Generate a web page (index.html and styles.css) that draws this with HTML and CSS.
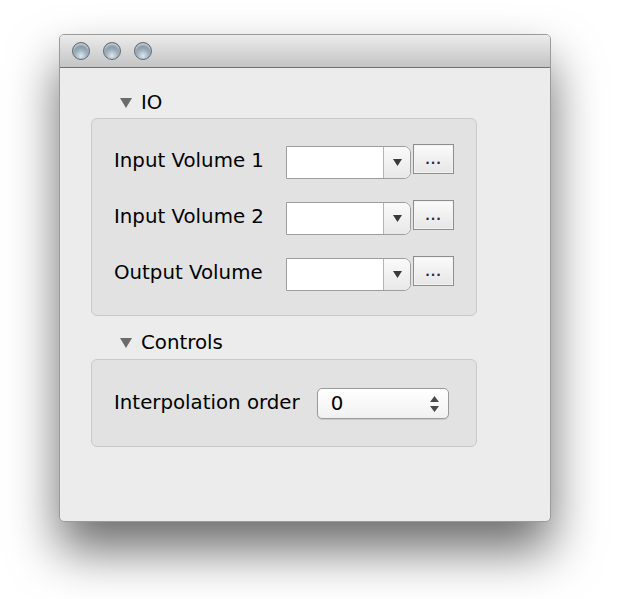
FILE: index.html
```html
<!doctype html>
<html>
<head>
<meta charset="utf-8">
<title>Resample Volume</title>
<link rel="stylesheet" href="styles.css">
</head>
<body>
	<div class="window">
		<div class="titlebar">
			<span class="light"></span>
			<span class="light"></span>
			<span class="light"></span>
		</div>
		<div class="content">
			<div class="section-head">
				<svg class="tri" width="12" height="10" viewBox="0 0 12 10"><path d="M0 0H12L6 10Z" fill="#6b6b6b"/></svg>
				<span>IO</span>
			</div>
			<div class="group">
				<div class="row">
					<span class="label">Input Volume 1</span>
					<div class="combo"><div class="field"></div><div class="drop"><svg width="9" height="7" viewBox="0 0 9 7"><path d="M0 0H9L4.5 7Z" fill="#3a3a3a"/></svg></div></div>
					<div class="browse">...</div>
				</div>
				<div class="row">
					<span class="label">Input Volume 2</span>
					<div class="combo"><div class="field"></div><div class="drop"><svg width="9" height="7" viewBox="0 0 9 7"><path d="M0 0H9L4.5 7Z" fill="#3a3a3a"/></svg></div></div>
					<div class="browse">...</div>
				</div>
				<div class="row">
					<span class="label">Output Volume</span>
					<div class="combo"><div class="field"></div><div class="drop"><svg width="9" height="7" viewBox="0 0 9 7"><path d="M0 0H9L4.5 7Z" fill="#3a3a3a"/></svg></div></div>
					<div class="browse">...</div>
				</div>
			</div>
			<div class="section-head second">
				<svg class="tri" width="12" height="10" viewBox="0 0 12 10"><path d="M0 0H12L6 10Z" fill="#6b6b6b"/></svg>
				<span>Controls</span>
			</div>
			<div class="group small">
				<div class="row">
					<span class="label auto">Interpolation order</span>
					<div class="spin">
						<span>0</span>
						<svg width="9" height="16" viewBox="0 0 9 16"><path d="M0 6H9L4.5 0Z M0 10H9L4.5 16Z" fill="#4a4a4a"/></svg>
					</div>
				</div>
			</div>
		</div>
	</div>
</body>
</html>
```

FILE: styles.css
```css
*{margin:0; padding:0; box-sizing:border-box;}
html,body{height:100%;}
body{background:#fff; padding:34px 0 0 59px; font-family:"DejaVu Sans", sans-serif; font-size:19.8px; color:#000; overflow:hidden;}

.window{width:492px; height:488px; background:#ececec; border:1px solid #9a9a9a; border-radius:5px; box-shadow:0 28px 50px rgba(0,0,0,.58); display:flex; flex-direction:column; overflow:hidden;}
.titlebar{height:33px; flex:none; display:flex; align-items:center; gap:13px; padding-left:12px; background:linear-gradient(#ebebeb,#c4c4c4); border-bottom:1px solid #717171;}
.light{width:18px; height:18px; border-radius:50%; border:1px solid #5f6d78; background:radial-gradient(circle at 50% 80%, #dde7ee 0, #9fb0bd 40%, #73838f 85%); box-shadow:inset 0 2px 2px rgba(255,255,255,.6);}

.content{padding:22px 0 0 31px;}
.section-head{height:24px; display:flex; align-items:center; padding-left:29px; gap:9px; margin-bottom:4px;}
.section-head.second{margin-top:14px; margin-bottom:5px;}
.tri{margin-top:2px;}

.group{width:386px; background:#e2e2e2; border:1px solid #c9c9c9; border-radius:6px; padding:27px 0 24px 22px; display:flex; flex-direction:column; gap:23px;}
.group.small{padding:28px 0 25px 22px;}
.row{display:flex; align-items:flex-start; height:33px;}
.label{width:172px; line-height:29px; flex:none;}
.label.auto{width:auto; margin-right:17px; line-height:29px;}

.combo{width:125px; height:33px; display:flex; border:1px solid #9d9d9d; border-radius:0 7px 7px 0; background:#fff; overflow:hidden;}
.field{flex:1; background:#fff;}
.drop{width:27px; border-left:1px solid #b5b5b5; background:linear-gradient(#fafafa,#e8e8e8); display:flex; align-items:center; justify-content:center;}
.browse{width:41px; height:30px; margin:-2px 0 0 2px; border:1px solid #8e8e8e; box-shadow:inset 0 0 0 1px #f2f2f2; background:linear-gradient(#fbfbfb,#e6e6e6); font-size:12px; font-weight:bold; color:#1d2c4a; text-align:center; line-height:30px; letter-spacing:1px;}

.spin{width:132px; height:31px; border:1px solid #9b9b9b; border-radius:5px; background:linear-gradient(#fff,#f1f1f1); display:flex; align-items:center; justify-content:space-between; padding:0 9px 0 13px; box-shadow:0 1px 1px rgba(0,0,0,.12);}
```
